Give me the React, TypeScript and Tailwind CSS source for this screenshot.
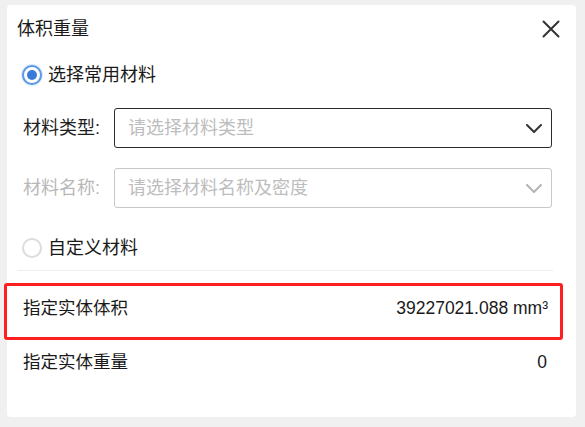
import React from "react";

const Chevron = ({ color }: { color: string }) => (
  <svg width="16" height="9" viewBox="0 0 16 9" fill="none">
    <path d="M1 1l7 7 7-7" stroke={color} strokeWidth="2" strokeLinecap="round" strokeLinejoin="round" />
  </svg>
);

const Radio = ({ checked, label }: { checked?: boolean; label: string }) => (
  <div className="flex items-center">
    {checked ? (
      <span className="w-[20px] h-[20px] rounded-full border-2 border-[#5b97e6] bg-white flex items-center justify-center shadow-[0_0_0_1px_#dbe8fa]">
        <span className="w-[10px] h-[10px] rounded-full bg-[#3a7bd8]" />
      </span>
    ) : (
      <span className="w-[20px] h-[20px] rounded-full border-2 border-[#dcdcdc] bg-white" />
    )}
    <span className="ml-[6px] text-[18px] text-[#1a1a1a]">{label}</span>
  </div>
);

const SelectRow = ({
  label,
  placeholder,
  disabled,
}: {
  label: string;
  placeholder: string;
  disabled?: boolean;
}) => (
  <div className="flex items-center h-[40px]">
    <span
      className={`w-[107px] shrink-0 whitespace-nowrap pl-[16px] text-[18px] ${
        disabled ? "text-[#b8b8b8]" : "text-[#1f1f1f]"
      }`}
    >
      {label}
    </span>
    <div
      className={`flex-1 h-[40px] flex items-center justify-between rounded-[3px] border pl-[13px] pr-[9px] ${
        disabled ? "border-[#c8c8c8]" : "border-[#2a2a2a]"
      }`}
    >
      <span className="text-[18px] text-[#bdbdbd]">{placeholder}</span>
      <Chevron color={disabled ? "#b5b5b5" : "#333333"} />
    </div>
  </div>
);

export default function App() {
  return (
    <div
      className="relative w-[585px] h-[427px] bg-[#f0f0f0] pt-[5px] pl-[7px]"
      style={{ fontFamily: '"Liberation Sans", "Noto Sans CJK SC", sans-serif' }}
    >
      <div className="w-[569px] h-[412px] bg-white rounded-[4px] flex flex-col">
        <div className="h-[48px] flex items-center justify-between pl-[10px] pr-[16px]">
          <span className="text-[18px] text-[#1a1a1a]">体积重量</span>
          <svg width="18" height="18" viewBox="0 0 18 18" fill="none">
            <path d="M1.5 1.5l15 15M16.5 1.5l-15 15" stroke="#333" strokeWidth="2" strokeLinecap="round" />
          </svg>
        </div>

        <div className="h-[44px] flex items-center pl-[15px]">
          <Radio checked label="选择常用材料" />
        </div>

        <div className="mt-[11px] pr-[24px]">
          <SelectRow label="材料类型:" placeholder="请选择材料类型" />
        </div>
        <div className="mt-[20px] pr-[24px]">
          <SelectRow label="材料名称:" placeholder="请选择材料名称及密度" disabled />
        </div>

        <div className="mt-[20px] h-[40px] flex items-center pl-[15px]">
          <Radio label="自定义材料" />
        </div>

        <div className="mt-[2px] ml-[10px] mr-[23px] border-t border-[#efefef]" />

        <div className="mt-[9px] h-[56px] flex items-center justify-between pl-[16px] pr-[28px] text-[17.5px] text-[#1a1a1a]">
          <span>指定实体体积</span>
          <span>39227021.088 mm³</span>
        </div>
        <div className="h-[52px] flex items-center justify-between pl-[16px] pr-[29px] text-[17.5px] text-[#1a1a1a]">
          <span>指定实体重量</span>
          <span>0</span>
        </div>
      </div>

      <div className="absolute left-[4px] top-[283px] w-[559px] h-[57px] border-[3px] border-[#ff1f1f] rounded-[3px] pointer-events-none" />
    </div>
  );
}
